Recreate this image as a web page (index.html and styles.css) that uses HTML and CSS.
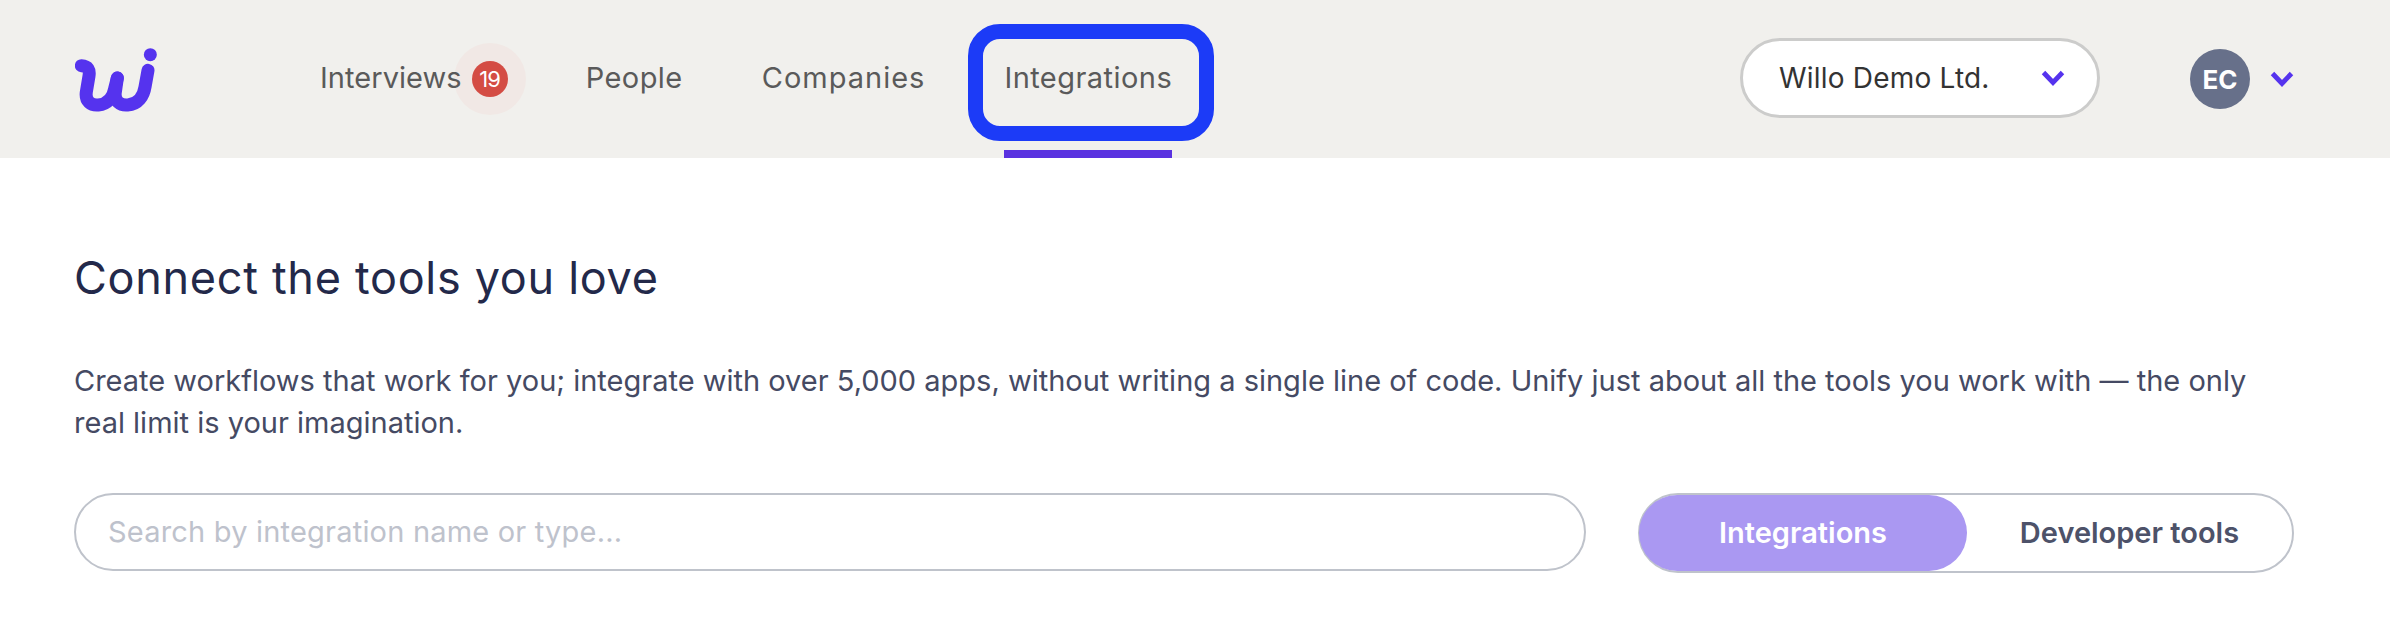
FILE: index.html
```html
<!DOCTYPE html>
<html lang="en">
<head>
<meta charset="utf-8">
<title>Integrations</title>
<link rel="stylesheet" href="styles.css">
</head>
<body>
<header class="topbar">
  <svg class="logo" viewBox="76 53 246 192" aria-hidden="true">
    <g fill="none" stroke="#5533ee" stroke-width="39" stroke-linecap="round" stroke-linejoin="round">
      <path d="M95 106C115 107 121 118 118 137L110 185C106 213 124 226 146 224C175 222 191 198 195 175L203 143"/>
      <path d="M203 143L197 185C193 213 212 226 234 224C266 222 282 196 286 170L295 120"/>
    </g>
    <circle cx="302" cy="73" r="19.5" fill="#5533ee"/>
  </svg>
  <nav class="nav">
    <a class="nav-link nav-interviews"><span class="nav-label">Interviews</span><span class="halo"><span class="badge">19</span></span></a>
    <a class="nav-link nav-people">People</a>
    <a class="nav-link nav-companies">Companies</a>
    <a class="nav-link is-active">Integrations</a>
  </nav>
  <button class="account">
    <span>Willo Demo Ltd.</span>
    <svg class="chevron" viewBox="0 0 24 16" aria-hidden="true"><path d="M2.5 2.5 12 12.5 21.5 2.5"/></svg>
  </button>
  <div class="user">
    <span class="avatar">EC</span>
    <svg class="chevron" viewBox="0 0 24 16" aria-hidden="true"><path d="M2.5 2.5 12 12.5 21.5 2.5"/></svg>
  </div>
</header>
<main class="content">
  <h1 class="title">Connect the tools you love</h1>
  <p class="intro">Create workflows that work for you; integrate with over 5,000 apps, without writing a single line of code. Unify just about all the tools you work with — the only real limit is your imagination.</p>
  <div class="controls">
    <div class="search">Search by integration name or type...</div>
    <div class="toggle">
      <span class="tab tab-on">Integrations</span>
      <span class="tab tab-off">Developer tools</span>
    </div>
  </div>
</main>
</body>
</html>
```

FILE: styles.css
```css
* { box-sizing: border-box; }
html, body { margin: 0; background: #fff; }
body { font-family: Inter, "Noto Sans", sans-serif; width: 2390px; height: 640px; overflow: hidden; }

.topbar {
  display: flex;
  align-items: center;
  height: 158px;
  padding: 0 96px 0 74px;
  background: #f1f0ed;
}
.logo { width: 82px; height: 64px; flex: none; margin: 1px 0 0 1px; }

.nav { display: flex; align-self: stretch; margin-left: 163px; flex: 1; }
.nav-link {
  position: relative;
  display: flex;
  align-items: center;
  padding-bottom: 4px;
  color: #5a5a5a;
  font-size: 29px;
  letter-spacing: 0.45px;
  white-space: nowrap;
}
.nav-label { position: relative; z-index: 1; }
.nav-interviews { letter-spacing: 0.05px; }
.nav-people { margin-left: 60px; }
.nav-companies { margin-left: 79px; letter-spacing: 1px; }
.is-active { margin-left: 79px; }
.is-active::before {
  content: "";
  position: absolute;
  left: -36px;
  right: -42px;
  top: 24px;
  height: 87px;
  border: 15px solid #1c3bf7;
  border-radius: 32px;
}
.is-active::after {
  content: "";
  position: absolute;
  left: 0;
  right: 0;
  bottom: 0;
  height: 8px;
  background: #5a32e0;
}
.halo {
  display: flex;
  align-items: center;
  justify-content: center;
  width: 72px;
  height: 72px;
  margin: 4px 0 0 -8px;
  border-radius: 50%;
  background: #f1e8e5;
}
.badge {
  display: flex;
  align-items: center;
  justify-content: center;
  width: 36px;
  height: 36px;
  border-radius: 50%;
  background: #d44c44;
  color: #fff;
  font-size: 22px;
  letter-spacing: -1px;
}

.account {
  display: flex;
  align-items: center;
  justify-content: space-between;
  width: 360px;
  height: 80px;
  margin: -2px 0 0;
  padding: 0 32px 0 36px;
  border: 3px solid #cccccb;
  border-radius: 40px;
  background: #fff;
  color: #333;
  font: inherit;
  font-size: 28px;
  letter-spacing: 0.2px;
}
.chevron { width: 24px; height: 16px; fill: none; stroke: #5533ee; stroke-width: 4.8; flex: none; }
.user { display: flex; align-items: center; gap: 20px; margin-left: 90px; }
.avatar {
  display: flex;
  align-items: center;
  justify-content: center;
  width: 60px;
  height: 60px;
  border-radius: 50%;
  background: #67708a;
  color: #fff;
  font-size: 26px;
  font-weight: 700;
}

.content { padding: 0 96px 0 74px; }
.title {
  margin: 94px 0 0;
  color: #23294a;
  font-size: 45px;
  font-weight: 400;
  line-height: 52px;
  letter-spacing: 0.7px;
}
.intro {
  margin: 56px 0 0;
  color: #454a63;
  font-size: 29px;
  line-height: 42px;
}
.controls { display: flex; align-items: flex-start; gap: 52px; margin-top: 49px; }
.search {
  display: flex;
  align-items: center;
  width: 1512px;
  height: 78px;
  padding: 0 32px 2px;
  border: 2px solid #bfc3cb;
  border-radius: 39px;
  color: #bec2cc;
  font-size: 29px;
  letter-spacing: 0.2px;
}
.toggle {
  display: flex;
  width: 656px;
  height: 80px;
  border: 2px solid #bfc3cb;
  border-radius: 40px;
}
.tab {
  display: flex;
  align-items: center;
  justify-content: center;
  padding-bottom: 2px;
  font-size: 29px;
  font-weight: 600;
}
.tab-on {
  width: 328px;
  margin: 0 0 0 -1px;
  border-radius: 40px;
  background: #aa98f2;
  color: #fff;
}
.tab-off { flex: 1; color: #4d5269; }
```
